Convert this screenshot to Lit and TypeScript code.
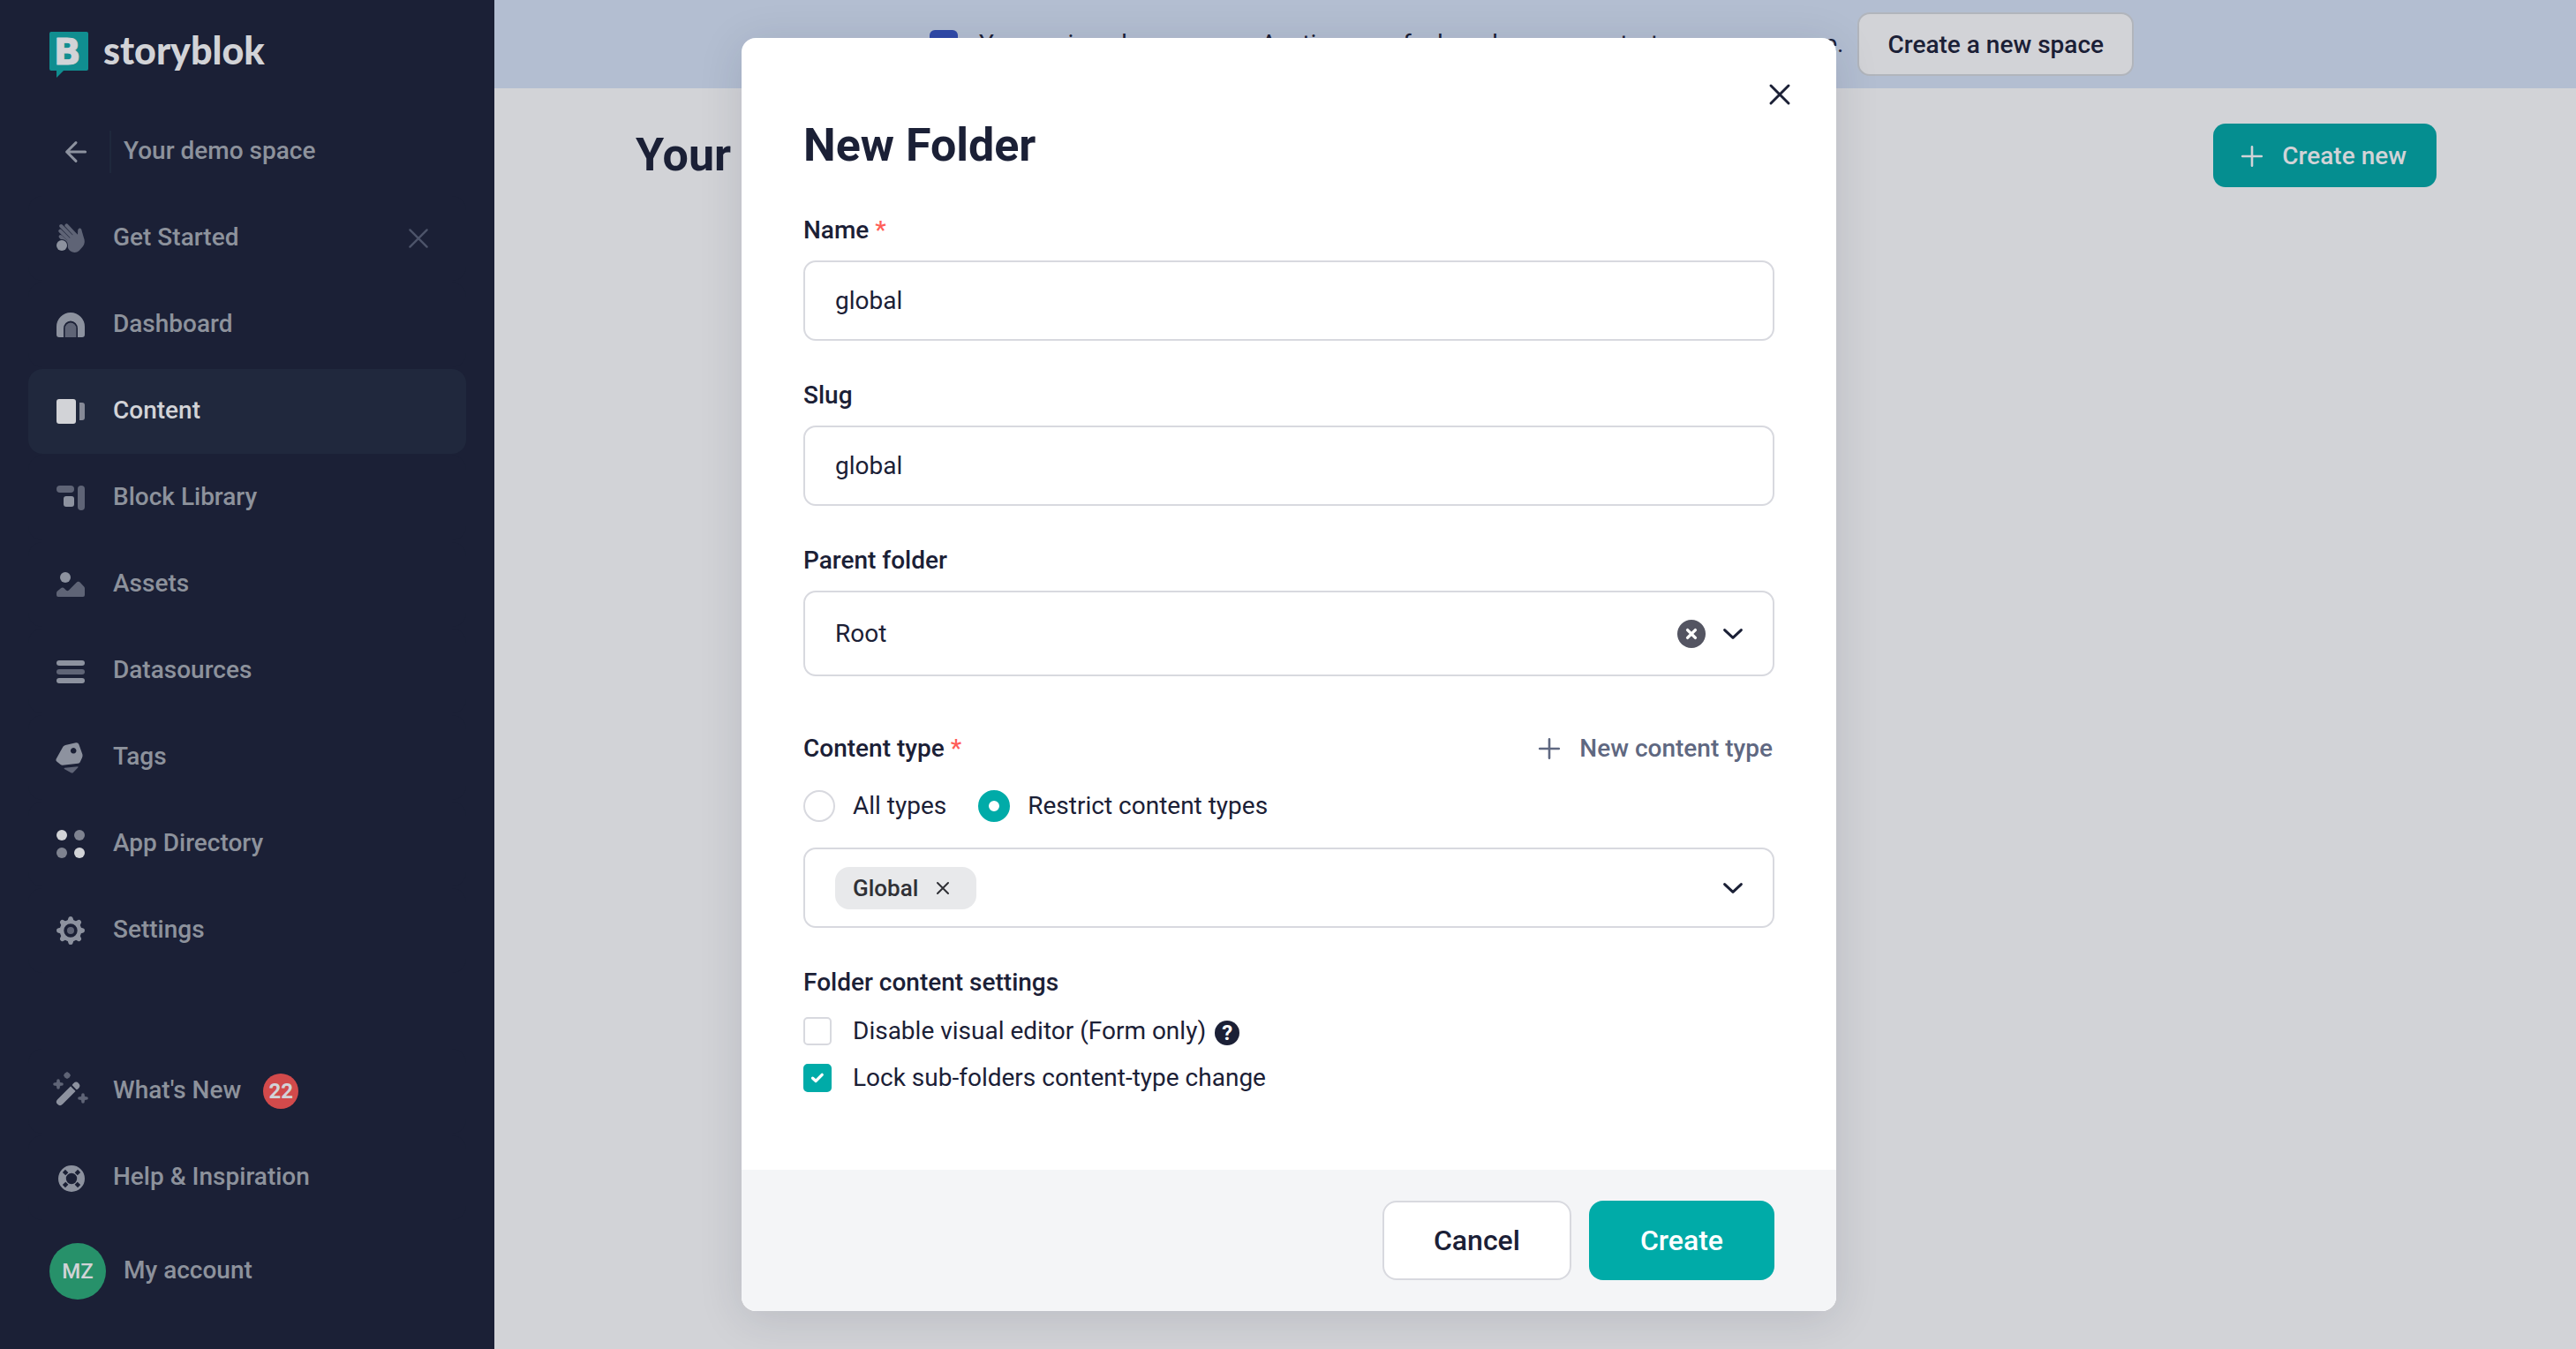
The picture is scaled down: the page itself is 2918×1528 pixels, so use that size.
import { LitElement, html, css, svg, type TemplateResult } from "lit";
import { customElement, property, state } from "lit/decorators.js";
import { classMap } from "lit/directives/class-map.js";

type IconName =
  | "wave" | "dashboard" | "content" | "blocks" | "assets"
  | "datasources" | "tags" | "apps" | "settings" | "wand" | "help";

interface NavEntry {
  icon: IconName;
  label: string;
  active?: boolean;
  closable?: boolean;
  badge?: number;
}

const MAIN_NAV: NavEntry[] = [
  { icon: "wave", label: "Get Started", closable: true },
  { icon: "dashboard", label: "Dashboard" },
  { icon: "content", label: "Content", active: true },
  { icon: "blocks", label: "Block Library" },
  { icon: "assets", label: "Assets" },
  { icon: "datasources", label: "Datasources" },
  { icon: "tags", label: "Tags" },
  { icon: "apps", label: "App Directory" },
  { icon: "settings", label: "Settings" },
];

const FOOT_NAV: NavEntry[] = [
  { icon: "wand", label: "What's New", badge: 22 },
  { icon: "help", label: "Help & Inspiration" },
];

const TEETH = [0, 45, 90, 135, 180, 225, 270, 315];

// Every icon sits on a 32 x 32 grid; "a" is the strong tone, "b" the faint one.
const ICONS: Record<IconName, TemplateResult> = {
  wave: svg`
    <g class="lb" stroke-width="4" stroke-linecap="round" fill="none">
      <path d="M11.4 1.4 L22 12.6"/>
      <path d="M5.2 2 L18 15"/>
      <path d="M4.2 7.6 L16 19.4"/>
      <path d="M4.6 14 L14 23"/>
    </g>
    <path class="b" d="M11 20 L21 9.6 L24 12 L24.2 6.4 Q25 4 27 4.6 Q28.6 5.2 28.8 8 L31.6 17.6 Q32.4 22 29.6 25.6 L25.6 30 Q22 33 17.4 31.2 Q13.4 29.6 12.6 25.6 Z"/>
    <circle class="hole" cx="6" cy="24" r="7"/>
    <circle class="a" cx="6" cy="24" r="6"/>`,
  dashboard: svg`
    <path class="a" d="M0 18 A16 16 0 0 1 32 18 V27 Q32 30 29 30 H24 V20 A8 8.6 0 0 0 8 20 V30 H3 Q0 30 0 27 Z"/>
    <path class="b" d="M9.6 30 V20 A6.4 6.4 0 0 1 22.4 20 V30 Z"/>`,
  content: svg`
    <rect class="a" x="0" y="2" width="22" height="28" rx="3"/>
    <path class="b" d="M26 6 H29 Q32 6 32 9 V23 Q32 26 29 26 H26 Z"/>`,
  blocks: svg`
    <rect class="b" x="0" y="2" width="20" height="8" rx="4"/>
    <rect class="b" x="24" y="2" width="8" height="28" rx="4"/>
    <rect class="a" x="8" y="14" width="12" height="12" rx="3"/>`,
  assets: svg`
    <circle class="a" cx="10" cy="8" r="6"/>
    <path class="b" d="M0 26 Q0 24.6 1 23.6 L5 20.2 Q7 18.8 8.8 20.6 L10.8 22.6 Q12.4 23.8 14 22.6 L22.4 14 Q24.8 11.6 27 14 L31.2 18.6 Q32 19.4 32 20.6 V28 Q32 30 30 30 H2 Q0 30 0 28 Z"/>`,
  datasources: svg`
    <rect class="a" x="0" y="4" width="32" height="6" rx="3"/>
    <rect class="b" x="0" y="14" width="32" height="6" rx="3"/>
    <rect class="a" x="0" y="24" width="32" height="6" rx="3"/>`,
  tags: svg`
    <path class="a" fill-rule="evenodd" d="M10 2 L22 -0.8 Q24.6 -1.2 25.4 1.2 L29.4 12.6 Q29.9 14.4 29 16.2 L26.8 21 Q26.2 22.6 24.4 22.8 L7 24.8 Q5.6 24.9 4.6 24 L0.2 20.6 Q-1.2 19.4 -0.4 17.8 L7.4 3.8 Q8.4 2.4 10 2 Z M19.2 5 a3.3 3.3 0 1 0 0.01 0 Z"/>
    <path class="b" d="M9.2 27.8 L24 26.2 Q24.9 26.3 24.4 27.2 L19 33 Q17.8 34 16.4 33.2 L8.8 29 Q8.2 28.2 9.2 27.8 Z"/>`,
  apps: svg`
    <circle class="bright" cx="6" cy="6" r="6"/>
    <circle class="mid" cx="26" cy="6" r="6"/>
    <circle class="mid" cx="6" cy="26" r="6"/>
    <circle class="bright" cx="26" cy="26" r="6"/>`,
  settings: svg`
    <circle class="la" cx="16" cy="16" r="10" stroke-width="4.6" fill="none"/>
    ${TEETH.map((t) => svg`<path class="a" d="M12.4 5 L13.6 1.6 Q14 0 16 0 Q18 0 18.4 1.6 L19.6 5 Z" transform="rotate(${t} 16 16)"/>`)}
    <circle class="b" cx="16" cy="16" r="4"/>`,
  wand: svg`
    <path class="la" d="M4 28 L18 14 M21.6 10.4 L22.2 9.8" stroke-width="8" stroke-linecap="round"/>
    <path class="lhole" d="M16.8 9.8 L22.4 15.4" stroke-width="2"/>
    <path class="b" d="M12 -6 L14.6 -4.2 L16 -2 L14.6 0.4 L12 2 L9.4 0.4 L8 -2 L9.4 -4.2 Z"/>
    <path class="lb" d="M2 4 V12 M-2 8 H6 M30 20 V28 M26 24 H34" stroke-width="3.6" stroke-linecap="round"/>
    <circle class="b" cx="2" cy="8" r="3"/><circle class="b" cx="30" cy="24" r="3"/>`,
  help: svg`
    <circle class="la" cx="17" cy="17" r="10.6" stroke-width="8.8" fill="none"/>
    <path class="lhole" d="M11.8 11.8 L8.4 8.4 M22.2 11.8 L25.6 8.4 M11.8 22.2 L8.4 25.6 M22.2 22.2 L25.6 25.6" stroke-width="4.4"/>`,
};

const base = css`
  * { box-sizing: border-box; }
  svg { display: block; overflow: visible; flex: none; }
  button, input, select {
    font: inherit;
    color: inherit;
    margin: 0;
    padding: 0;
    border: 0;
    background: none;
  }
  button { cursor: pointer; }
`;

@customElement("nav-item")
class NavItem extends LitElement {
  @property({ attribute: false }) entry!: NavEntry;

  static styles = [base, css`
    :host { display: block; }
    .item {
      --bg: #1b2036;
      --a: #8d929f;
      --b: #5f6476;
      display: flex;
      align-items: center;
      height: 96px;
      padding: 0 42px 0 32px;
      border-radius: 16px;
      background: var(--bg);
    }
    .active { --bg: #20283d; --a: #d2d3d7; --b: #868a97; }
    .link {
      display: flex;
      align-items: center;
      gap: 32px;
      color: #8d929c;
      text-decoration: none;
      font-size: 28px;
      line-height: 32px;
      font-weight: 500;
    }
    .active .link { color: #d2d3d7; }
    .label { padding-bottom: 3px; }
    .icon { width: 32px; height: 32px; }
    .a { fill: var(--a); }
    .b { fill: var(--b); }
    .la { stroke: var(--a); }
    .lb { stroke: var(--b); }
    .hole { fill: var(--bg); }
    .lhole { stroke: var(--bg); }
    .bright { fill: #d2d3d7; }
    .mid { fill: #7f8390; }
    .close { margin-left: auto; color: #4d546a; }
    .badge {
      display: grid;
      place-items: center;
      width: 40px;
      height: 40px;
      margin-left: 25px;
      border-radius: 50%;
      background: #d24a4b;
      color: #d2d3d7;
      font-size: 24px;
      font-weight: 700;
    }
  `];

  render() {
    const e = this.entry;
    return html`
      <div class=${classMap({ item: true, active: !!e.active })}>
        <a class="link" href="#">
          <svg class="icon" viewBox="0 0 32 32">${ICONS[e.icon]}</svg>
          <span class="label">${e.label}</span>
        </a>
        ${e.badge ? html`<span class="badge">${e.badge}</span>` : ""}
        ${e.closable
          ? html`<button class="close" aria-label="Dismiss ${e.label}">
              <svg width="24" height="24" viewBox="0 0 24 24" fill="none" stroke="currentColor" stroke-width="2.4" stroke-linecap="round"><path d="M2.4 2.4 L21.6 21.6 M21.6 2.4 L2.4 21.6"/></svg>
            </button>`
          : ""}
      </div>`;
  }
}

@customElement("app-sidebar")
class AppSidebar extends LitElement {
  static styles = [base, css`
    :host {
      display: flex;
      flex-direction: column;
      padding: 36px 32px 56px;
      background: #1b2036;
      color: #8d929c;
      font-size: 28px;
      line-height: 32px;
      font-weight: 500;
    }
    .logo {
      display: flex;
      gap: 17px;
      padding-left: 24px;
      color: #d2d3d7;
      text-decoration: none;
    }
    .mark { width: 44px; height: 52px; }
    .mark-letter {
      font: 700 40px "DejaVu Sans", sans-serif;
      fill: #d2d3d7;
      stroke: #d2d3d7;
      stroke-width: 1;
      stroke-linejoin: round;
    }
    .word { font-family: Lato, sans-serif; font-weight: 900; font-size: 43px; line-height: 42px; }
    .space {
      display: flex;
      align-items: center;
      margin: 60px 0 26px;
      padding-left: 42px;
      text-decoration: none;
    }
    .back { color: #8d929f; }
    .space-name {
      margin-left: 26px;
      padding: 7px 0 9px 14px;
      border-left: 2px solid #1f283c;
      color: #8d929c;
    }
    .list { display: grid; gap: 2px; }
    .foot { margin-top: auto; }
    .account {
      display: flex;
      align-items: center;
      gap: 20px;
      margin: 26px 0 0 24px;
      color: #8d929c;
      text-decoration: none;
    }
    .avatar {
      display: grid;
      place-items: center;
      width: 64px;
      height: 64px;
      border-radius: 50%;
      background: #27916a;
      color: #d2d3d7;
      font-size: 24px;
    }
    .account-label { padding-bottom: 3px; }
  `];

  render() {
    return html`
      <a class="logo" href="#">
        <svg class="mark" viewBox="0 0 44 52">
          <path fill="#108e90" d="M2 0 H42 Q44 0 44 2 V42 Q44 44 42 44 H16 L8 52 V44 H2 Q0 44 0 42 V2 Q0 0 2 0 Z"/>
          <text class="mark-letter" x="5" y="37">B</text>
        </svg>
        <span class="word">storyblok</span>
      </a>
      <a class="space" href="#">
        <svg class="back" width="24" height="24" viewBox="0 0 24 24" fill="none" stroke="currentColor" stroke-width="3" stroke-linecap="round" stroke-linejoin="round"><path d="M22.6 12 H1.6 M12 1.6 L1.6 12 L12 22.4"/></svg>
        <span class="space-name">Your demo space</span>
      </a>
      <nav class="list">${MAIN_NAV.map((e) => html`<nav-item .entry=${e}></nav-item>`)}</nav>
      <div class="foot">
        <div class="list">${FOOT_NAV.map((e) => html`<nav-item .entry=${e}></nav-item>`)}</div>
        <a class="account" href="#">
          <span class="avatar">MZ</span>
          <span class="account-label">My account</span>
        </a>
      </div>`;
  }
}

const PLUS = svg`<path d="M12 1.2 V22.8 M1.2 12 H22.8"/>`;

@customElement("folder-dialog")
class FolderDialog extends LitElement {
  @state() private restrict = true;
  @state() private lock = true;
  @state() private formOnly = false;

  static styles = [base, css`
    :host { display: block; color: #1b2036; font-size: 28px; line-height: 34px; }
    .dialog {
      position: relative;
      width: 1240px;
      max-width: 100%;
      border-radius: 16px;
      overflow: hidden;
      background: #fff;
    }
    .shade { border-radius: 16px; box-shadow: 0 8px 50px rgba(27, 32, 54, 0.13); }
    .close { position: absolute; top: 52px; right: 52px; }
    .body { padding: 91px 70px 88px; }
    .title { margin: 0 0 48px; font-size: 52px; line-height: 62px; font-weight: 700; }
    .field { margin-bottom: 45px; }
    .name { display: block; margin: 0 0 17px; font-size: 28px; font-weight: 500; }
    .req { color: #ff5e57; }
    .box {
      display: flex;
      align-items: center;
      width: 100%;
      height: 91px;
      padding: 0 34px;
      border: 2px solid #d8d9df;
      border-radius: 14px;
      background: #fff;
    }
    .tall { height: 97px; margin-bottom: 65px; }
    .select { flex: 1; min-width: 0; appearance: none; outline: none; }
    .clear { margin-right: 20px; }
    .row { display: flex; align-items: center; justify-content: space-between; margin-bottom: 30px; }
    .row .name { margin: 0; }
    .new { display: flex; align-items: center; gap: 22px; padding-right: 2px; color: #5f6881; font-weight: 500; }
    .radios { display: flex; gap: 36px; margin-bottom: 29px; }
    .option { display: flex; align-items: center; gap: 20px; height: 36px; }
    .radio {
      appearance: none;
      width: 36px;
      height: 36px;
      border: 2px solid #d8d9df;
      border-radius: 50%;
      background: #fff;
    }
    .radio:checked { border: 12px solid #00aba8; }
    .chip {
      display: flex;
      align-items: center;
      gap: 20px;
      height: 48px;
      padding: 0 30px 0 20px;
      border-radius: 16px;
      background: #e8e9eb;
      color: #303136;
      font-size: 26px;
      font-weight: 500;
    }
    .settings { margin-bottom: 22px; }
    .checks { display: grid; gap: 21px; justify-items: start; }
    .line { display: flex; align-items: center; gap: 10px; height: 32px; }
    .check { display: flex; align-items: center; gap: 24px; }
    .tick { display: grid; width: 32px; height: 32px; place-items: center; }
    .tick > * { grid-area: 1 / 1; }
    .checkbox {
      appearance: none;
      width: 32px;
      height: 32px;
      border: 2px solid #d8d9df;
      border-radius: 5px;
      background: #fff;
    }
    .checkbox:checked { border-color: #00aba8; background: #00aba8; }
    .mark { pointer-events: none; }
    .help {
      width: 28px;
      height: 28px;
      margin-top: 4px;
      border-radius: 50%;
      background: #1b2036;
      color: #fff;
      font-size: 24px;
      line-height: 28px;
      font-weight: 700;
    }
    .footer {
      display: flex;
      justify-content: flex-end;
      gap: 20px;
      padding: 35px 70px;
      background: #f4f5f7;
    }
    .action { height: 90px; border-radius: 16px; font-size: 32px; font-weight: 500; }
    .cancel { padding: 0 56px; border: 2px solid #d8d9df; background: #fff; }
    .create { padding: 0 58px; background: #00aba8; color: #fff; }
  `];

  private chevron = html`<svg width="22" height="12" viewBox="0 0 22 12" fill="none" stroke="#1b2036" stroke-width="3" stroke-linecap="round" stroke-linejoin="round"><path d="M1.6 1.6 L11 10.4 L20.4 1.6"/></svg>`;

  render() {
    return html`
      <div class="shade">
      <form class="dialog" role="dialog" aria-labelledby="title" @submit=${(e: Event) => e.preventDefault()}>
        <button class="close" type="button" aria-label="Close">
          <svg width="24" height="24" viewBox="0 0 24 24" fill="none" stroke="currentColor" stroke-width="3" stroke-linecap="round"><path d="M2 2 L22 22 M22 2 L2 22"/></svg>
        </button>
        <div class="body">
          <h2 class="title" id="title">New Folder</h2>
          <div class="field">
            <label class="name" for="name">Name <span class="req">*</span></label>
            <input class="box" id="name" type="text" .value=${"global"} />
          </div>
          <div class="field">
            <label class="name" for="slug">Slug</label>
            <input class="box" id="slug" type="text" .value=${"global"} />
          </div>
          <label class="name" for="parent">Parent folder</label>
          <div class="box tall">
            <select class="select" id="parent"><option>Root</option></select>
            <button class="clear" type="button" aria-label="Clear parent folder">
              <svg width="32" height="32" viewBox="0 0 32 32"><circle cx="16" cy="16" r="16" fill="#545562"/><path d="M11.6 11.6 L20.4 20.4 M20.4 11.6 L11.6 20.4" stroke="#fff" stroke-width="3.4" stroke-linecap="round"/></svg>
            </button>
            ${this.chevron}
          </div>
          <div class="row">
            <label class="name" for="types">Content type <span class="req">*</span></label>
            <button class="new" type="button">
              <svg width="24" height="24" viewBox="0 0 24 24" fill="none" stroke="currentColor" stroke-width="2.6" stroke-linecap="round">${PLUS}</svg>
              New content type
            </button>
          </div>
          <div class="radios">
            <label class="option">
              <input class="radio" type="radio" name="scope" .checked=${!this.restrict} @change=${() => (this.restrict = false)} />
              All types
            </label>
            <label class="option">
              <input class="radio" type="radio" name="scope" .checked=${this.restrict} @change=${() => (this.restrict = true)} />
              Restrict content types
            </label>
          </div>
          <div class="field box">
            <span class="chip">Global
              <button type="button" aria-label="Remove Global">
                <svg width="16" height="16" viewBox="0 0 16 16" fill="none" stroke="currentColor" stroke-width="2" stroke-linecap="round"><path d="M2 2 L14 14 M14 2 L2 14"/></svg>
              </button>
            </span>
            <select class="select" id="types"></select>
            ${this.chevron}
          </div>
          <h3 class="name settings">Folder content settings</h3>
          <div class="checks">
            <div class="line">
              ${this.checkbox("Disable visual editor (Form only)", this.formOnly, (v) => (this.formOnly = v))}
              <button class="help" type="button" aria-label="Help">?</button>
            </div>
            <div class="line">
              ${this.checkbox("Lock sub-folders content-type change", this.lock, (v) => (this.lock = v))}
            </div>
          </div>
        </div>
        <div class="footer">
          <button class="action cancel" type="button">Cancel</button>
          <button class="action create" type="submit">Create</button>
        </div>
      </form>
      </div>`;
  }

  private checkbox(label: string, on: boolean, set: (v: boolean) => void) {
    return html`
      <label class="check">
        <span class="tick">
          <input class="checkbox" type="checkbox" .checked=${on} @change=${(e: Event) => set((e.target as HTMLInputElement).checked)} />
          ${on ? html`<svg class="mark" width="14" height="10" viewBox="0 0 14 10" fill="none" stroke="#fff" stroke-width="3.4" stroke-linecap="round" stroke-linejoin="round"><path d="M1.6 5.2 L5.2 8.4 L12.2 1.4"/></svg>` : ""}
        </span>
        ${label}
      </label>`;
  }
}

@customElement("app-root")
class AppRoot extends LitElement {
  static styles = [base, css`
    :host {
      display: grid;
      grid-template-columns: 560px minmax(0, 1fr);
      min-height: 100vh;
      position: relative;
      font-family: Roboto, "Liberation Sans", sans-serif;
      background: #d2d3d7;
      color: #1b2036;
      font-size: 28px;
      line-height: 34px;
    }
    .banner {
      display: flex;
      align-items: center;
      justify-content: center;
      height: 100px;
      padding-right: 8px;
      background: #b3bed1;
    }
    .banner-text { margin: 0 16px 0 24px; white-space: nowrap; }
    .btn {
      display: flex;
      align-items: center;
      height: 72px;
      border-radius: 14px;
      font-weight: 500;
    }
    .outline { padding: 2px 32px 0; border: 2px solid #b1b5bc; background: #d2d3d7; }
    .solid { gap: 22px; padding: 2px 34px 0 32px; background: #058e90; color: #d2d3d7; }
    .head {
      display: flex;
      align-items: center;
      justify-content: space-between;
      padding: 40px 158px 40px 160px;
    }
    .heading { margin: 0; font-size: 52px; line-height: 62px; font-weight: 700; }
    .overlay {
      position: absolute;
      inset: 0;
      display: flex;
      align-items: center;
      justify-content: center;
      padding-left: 2px;
    }
  `];

  render() {
    return html`
      <app-sidebar></app-sidebar>
      <main>
        <div class="banner">
          <svg width="32" height="32" viewBox="0 0 32 32"><rect width="32" height="32" rx="6" fill="#2f49a8"/><path d="M16 12 V23.6 M10 16 H22" stroke="#d2d3d7" stroke-width="2.6" stroke-linecap="round"/></svg>
          <span class="banner-text">You are in a demo space. Anytime you feel ready you can start your own space.</span>
          <button class="btn outline">Create a new space</button>
        </div>
        <header class="head">
          <h1 class="heading">Your</h1>
          <button class="btn solid">
            <svg width="24" height="24" viewBox="0 0 24 24" fill="none" stroke="currentColor" stroke-width="2.6" stroke-linecap="round">${PLUS}</svg>
            Create new
          </button>
        </header>
      </main>
      <div class="overlay"><folder-dialog></folder-dialog></div>`;
  }
}
